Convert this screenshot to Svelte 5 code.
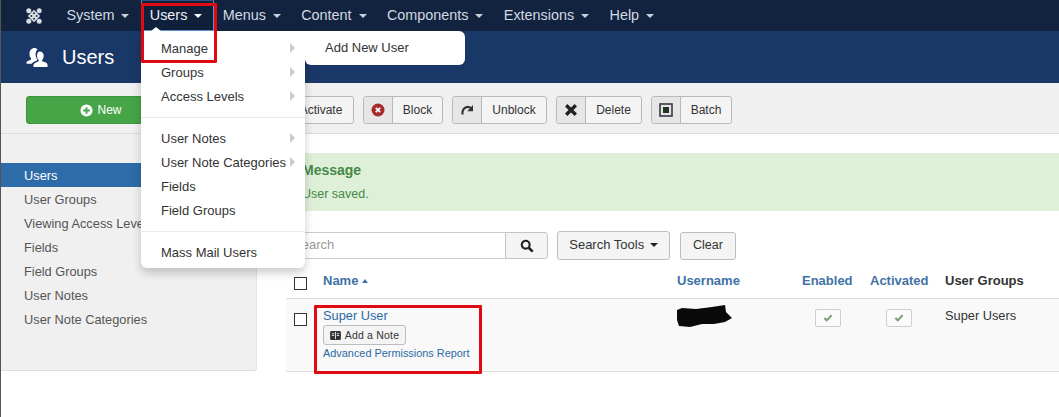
<script>
  const navItems = ['System', 'Users', 'Menus', 'Content', 'Components', 'Extensions', 'Help'];
  const sideItems = ['Users', 'User Groups', 'Viewing Access Levels', 'Fields', 'Field Groups', 'User Notes', 'User Note Categories'];
  const menuA = [['Manage', true], ['Groups', true], ['Access Levels', true]];
  const menuB = [['User Notes', true], ['User Note Categories', true], ['Fields', false], ['Field Groups', false]];
</script>

<div class="app">
  <nav class="nav">
    <svg class="logo" viewBox="0 0 16 16" width="16" height="16">
      <g fill="#d9dde3">
        <circle cx="2.800" cy="2.800" r="2.500"/>
        <circle cx="13.200" cy="2.800" r="2.500"/>
        <circle cx="2.800" cy="13.200" r="2.500"/>
        <circle cx="13.200" cy="13.200" r="2.500"/>
        <path d="M8 1.800 14.200 8 8 14.200 1.800 8z"/>
      </g>
      <g fill="#2a3750">
        <circle cx="8" cy="5.300" r="1"/>
        <circle cx="8" cy="10.700" r="1"/>
        <circle cx="5.300" cy="8" r="1"/>
        <circle cx="10.700" cy="8" r="1"/>
      </g>
    </svg>
    <ul class="nav-list">
      {#each navItems as item}
        <li class="nav-item" class:open={item === 'Users'}>
          <span>{item}</span><i class="caret"></i>
        </li>
      {/each}
    </ul>
  </nav>

  <header class="title">
    <svg viewBox="0 0 22 19" width="22" height="19">
      <g fill="#fff">
        <path d="M13.500 3.500c2.600 0 4.200 1.900 4.200 4.300 0 1.800-.7 3.300-1.700 4.200-.3.800.1 1.200 1 1.600 2 .8 4.100 1.200 4.500 2.900V19H7.500v-2.300c.4-1.500 2.300-2.100 4.200-2.900.9-.4 1.300-.9 1-1.700-1-.9-1.700-2.400-1.700-4.300 0-2.400 1-4.300 2.500-4.300z"/>
        <path d="M8.500 0c1.300 0 2.400.6 3 1.500-1.200 1-1.900 2.700-1.900 4.800 0 2 .6 3.700 1.700 5 .1.700-.1 1-.9 1.400-1.900.8-3.900 1.500-4.600 3.100H.500v-1.600c.3-1.100 2.200-1.700 3.800-2.300.8-.4 1-.8.800-1.500C4.100 9.500 3.500 8 3.500 5.800 3.500 2.200 5.700 0 8.500 0z"/>
      </g>
    </svg>
    <h1>Users</h1>
  </header>

  <div class="toolbar">
    <button class="btn-new">
      <svg viewBox="0 0 14 14" width="13" height="13"><circle cx="7" cy="7" r="6.500" fill="#fff"/><path d="M7 3.500v7M3.500 7h7" stroke="#46a546" stroke-width="2"/></svg>
      New
    </button>
    <button class="tool w-edit"><span class="ic"></span><span class="lb">Edit</span></button>
    <button class="tool w-activate"><span class="ic"></span><span class="lb">Activate</span></button>
    <button class="tool w-block">
      <span class="ic"><svg viewBox="0 0 14 14" width="14" height="14"><circle cx="7" cy="7" r="6.500" fill="#a72a2d"/><path d="M4.800 4.800l4.400 4.400M9.200 4.800l-4.400 4.400" stroke="#fff" stroke-width="1.800"/></svg></span>
      <span class="lb">Block</span>
    </button>
    <button class="tool w-unblock">
      <span class="ic"><svg viewBox="0 0 14 14" width="14" height="14"><path d="M2.500 11.500C2 7 4.500 3.800 7.800 3.800c1.300 0 2.300.5 3 1.300" fill="none" stroke="#333" stroke-width="2.200"/><path d="M13 2v6.200H7.200z" fill="#333"/></svg></span>
      <span class="lb">Unblock</span>
    </button>
    <button class="tool w-delete">
      <span class="ic"><svg viewBox="0 0 14 14" width="14" height="14"><path d="M2.200 2.200l9.600 9.600M11.800 2.200l-9.600 9.600" stroke="#222" stroke-width="3.400"/></svg></span>
      <span class="lb">Delete</span>
    </button>
    <button class="tool w-batch">
      <span class="ic"><svg viewBox="0 0 14 14" width="14" height="14"><rect x="1" y="1" width="12" height="12" fill="none" stroke="#3b3648" stroke-width="1.600"/><rect x="4" y="4" width="6" height="6" fill="#223322"/></svg></span>
      <span class="lb">Batch</span>
    </button>
  </div>

  <div class="body">
    <aside class="sidebar">
      <ul>
        {#each sideItems as s, i}
          <li class:active={i === 0}>{s}</li>
        {/each}
      </ul>
    </aside>

    <main class="main">
      <div class="alert">
        <h4>Message</h4>
        <p>User saved.</p>
      </div>

      <div class="search">
        <input class="search-input" placeholder="Search" />
        <button class="search-btn" aria-label="Search">
          <svg viewBox="0 0 16 16" width="14" height="14"><circle cx="6.500" cy="6.500" r="4.500" fill="none" stroke="#222" stroke-width="2.400"/><path d="M10 10l4.500 4.500" stroke="#222" stroke-width="3"/></svg>
        </button>
        <button class="plain tools">Search Tools <i class="caret dark"></i></button>
        <button class="plain clear">Clear</button>
      </div>

      <div class="grid head">
        <div><span class="cb"></span></div>
        <div class="th">Name <i class="up"></i></div>
        <div class="th">Username</div>
        <div class="th">Enabled</div>
        <div class="th">Activated</div>
        <div class="th dark-th">User Groups</div>
      </div>
      <div class="grid row">
        <div><span class="cb row-cb"></span></div>
        <div class="name">
          <a href="#top">Super User</a>
          <button class="note">
            <svg viewBox="0 0 12 10" width="11" height="9"><rect width="12" height="10" rx="1.500" fill="#333"/><path d="M6 1v8" stroke="#f4f4f4"/><path d="M2 3h2.500M2 5h2.500M7.500 3H10M7.500 5H10" stroke="#f4f4f4"/></svg>
            Add a Note
          </button>
          <a class="small" href="#top">Advanced Permissions Report</a>
        </div>
        <div>
          <svg class="blob" viewBox="0 0 56 22" width="56" height="22"><path d="M1 5 6 3 20 4 36 2 49 0 50 7 56 13 49 17 38 19 26 19 14 22 3 21 1 15z" fill="#0a0a0a"/></svg>
        </div>
        <div><span class="toggle t1"><svg viewBox="0 0 12 10" width="10" height="8"><path d="M1.500 5l3 3L10.500 1.500" fill="none" stroke="#6f9f72" stroke-width="2.400"/></svg></span></div>
        <div><span class="toggle t2"><svg viewBox="0 0 12 10" width="10" height="8"><path d="M1.500 5l3 3L10.500 1.500" fill="none" stroke="#6f9f72" stroke-width="2.400"/></svg></span></div>
        <div class="groups">Super Users</div>
      </div>
    </main>
  </div>

  <div class="menu">
    <i class="notch"></i>
    <ul>
      {#each menuA as [t, sub]}
        <li><span>{t}</span>{#if sub}<i class="arrow"></i>{/if}</li>
      {/each}
    </ul>
    <hr />
    <ul>
      {#each menuB as [t, sub]}
        <li><span>{t}</span>{#if sub}<i class="arrow"></i>{/if}</li>
      {/each}
    </ul>
    <hr />
    <ul>
      <li><span>Mass Mail Users</span></li>
    </ul>
  </div>
  <div class="submenu">Add New User</div>

  <div class="mark mark-top"></div>
  <div class="mark mark-row"></div>
</div>

<style>
  :global(body) { margin: 0; background: #fff; }
  * { box-sizing: border-box; }
  .app {
    position: relative;
    width: 1059px;
    height: 417px;
    overflow: hidden;
    border-left: 1px solid #555;
    font-family: "Liberation Sans", Arial, sans-serif;
    font-size: 13px;
    color: #333;
  }
  ul { list-style: none; margin: 0; padding: 0; }

  .nav {
    height: 31px;
    background: #12233f;
    display: flex;
    align-items: center;
    padding-left: 25px;
  }
  .logo { flex: none; }
  .nav-list { display: flex; margin-left: 24.500px; gap: 20.300px; }
  .nav-item {
    display: flex;
    align-items: center;
    color: #d3d9e2;
    font-size: 14.400px;
    line-height: 31px;
    position: relative;
  }
  .nav-item.open { color: #eef1f5; }
  .nav-item.open::before {
    content: "";
    position: absolute;
    left: -9px;
    right: -12px;
    top: 0;
    bottom: 0;
    border: 1px solid #5d93cf;
    border-top-color: #33527f;
    background: #10203a;
    z-index: 0;
  }
  .nav-item span, .nav-item .caret { position: relative; z-index: 1; }
  .caret {
    display: inline-block;
    width: 0;
    height: 0;
    margin-left: 7px;
    margin-top: 1px;
    border-left: 4px solid transparent;
    border-right: 4px solid transparent;
    border-top: 4px solid #c9d0da;
  }
  .nav-item.open .caret { border-top-color: #fff; }
  .caret.dark { border-top-color: #222; margin-left: 2px; vertical-align: 2px; }

  .title {
    height: 52px;
    background: #1a3867;
    display: flex;
    align-items: center;
    padding-left: 25px;
    gap: 14px;
  }
  h1 { margin: 0; color: #fff; font-size: 20px; font-weight: 400; }

  .toolbar {
    height: 51px;
    background: #f0f0f0;
    border-bottom: 1px solid #dcdcdc;
    display: flex;
    align-items: flex-start;
    padding: 13px 0 0 25px;
    gap: 9px;
  }
  button { font-family: inherit; font-size: 12px; color: #333; cursor: pointer; }
  .btn-new {
    width: 150px;
    height: 28px;
    background: #46a546;
    border: 1px solid #3d963d;
    border-radius: 3px;
    color: #fff;
    font-size: 12px;
    display: flex;
    align-items: center;
    justify-content: center;
    gap: 4px;
    padding: 0;
  }
  .tool {
    height: 28px;
    display: flex;
    align-items: stretch;
    padding: 0;
    background: #f4f4f4;
    border: 1px solid #b9b9b9;
    border-radius: 3px;
  }
  .w-edit { width: 65px; }
  .w-activate { width: 95px; }
  .w-block { width: 80px; }
  .w-unblock { width: 95px; }
  .w-delete { width: 86px; }
  .w-batch { width: 81px; }
  .ic {
    flex: none;
    width: 29px;
    background: #e6e6e6;
    border-right: 1px solid #b9b9b9;
    border-radius: 3px 0 0 3px;
    display: flex;
    align-items: center;
    justify-content: center;
  }
  .lb { flex: 1; line-height: 26px; white-space: nowrap; text-align: center; }

  .body { display: flex; align-items: flex-start; }
  .sidebar {
    width: 256px;
    height: 237px;
    background: #f0f0f0;
    border-bottom: 1px solid #dedede;
    border-right: 1px solid #e4e4e4;
    border-radius: 0 0 3px 0;
    padding-top: 29px;
  }
  .sidebar li {
    height: 24px;
    line-height: 26px;
    padding-left: 23px;
    font-size: 12.800px;
    color: #555;
    white-space: nowrap;
  }
  .sidebar li.active { background: #2d6ca9; color: #fff; }

  .main { margin-left: 29px; width: 773px; padding-top: 19px; }
  .alert {
    height: 58px;
    background: #dff0d8;
    padding: 9px 0 0 16px;
    color: #468847;
  }
  .alert h4 { margin: 0; font-size: 14px; line-height: 17px; font-weight: 700; }
  .alert p { margin: 7px 0 0; font-size: 12.500px; line-height: 17px; }

  .search { display: flex; align-items: flex-start; margin-top: 21px; height: 28px; }
  .search-input {
    width: 219px;
    height: 27px;
    border: 1px solid #ccc;
    border-right: 0;
    border-radius: 3px 0 0 3px;
    padding: 0 6px 2px;
    font: 13px "Liberation Sans", Arial, sans-serif;
    background: #fff;
  }
  .search-input::placeholder { color: #999; opacity: 1; }
  .search-btn {
    width: 43px;
    height: 27px;
    background: #f4f4f4;
    border: 1px solid #c4c4c4;
    border-radius: 0 3px 3px 0;
    padding: 0;
    display: flex;
    align-items: center;
    justify-content: center;
  }
  .plain {
    background: #f4f4f4;
    border: 1px solid #bdbdbd;
    border-radius: 3px;
    height: 28px;
    padding: 0 0 2px;
    font-size: 13px;
  }
  .tools { width: 113px; margin: -1px 0 0 9px; height: 29px; }
  .clear { width: 56px; margin-left: 10px; font-size: 12.500px; }

  .grid {
    display: grid;
    grid-template-columns: 37px 354px 125px 68px 75px 1fr;
  }
  .head { height: 39px; padding-top: 13px; border-bottom: 1px solid #ddd; }
  .th { color: #3f72a5; font-weight: 700; font-size: 13px; line-height: 16px; }
  .th.dark-th { color: #333; }
  .up {
    display: inline-block;
    width: 0; height: 0;
    border-left: 3.500px solid transparent;
    border-right: 3.500px solid transparent;
    border-bottom: 4px solid #3f72a5;
    vertical-align: 2px;
  }
  .cb {
    display: block;
    width: 13px;
    height: 13px;
    margin: 4px 0 0 8px;
    background: #fff;
    border: 1px solid #333;
  }
  .row {
    height: 73px;
    background: #f9f9f9;
    border-bottom: 1px solid #ddd;
  }
  .cb.row-cb { margin-top: 14px; }
  .name { display: flex; flex-direction: column; align-items: flex-start; padding-top: 9px; }
  a { color: #2c6aa5; text-decoration: none; font-size: 12.800px; line-height: 16px; }
  a.small { font-size: 10.900px; line-height: 14px; margin-top: 1px; }
  .note {
    width: 83px;
    height: 20px;
    margin-top: 1px;
    background: #f4f4f4;
    border: 1px solid #bdbdbd;
    border-radius: 3px;
    font-size: 10.500px;
    padding: 0;
    display: flex;
    align-items: center;
    justify-content: center;
    gap: 4px;
    letter-spacing: .2px;
  }
  .blob { display: block; margin-top: 6px; margin-left: -1px; }
  .toggle {
    display: flex;
    align-items: center;
    justify-content: center;
    width: 26px;
    height: 18px;
    margin-top: 10px;
    background: #fbfbfb;
    border: 1px solid #cfcfcf;
    border-radius: 2px;
  }
  .t1 { margin-left: 13px; }
  .t2 { margin-left: 16px; }
  .groups { padding-top: 9px; line-height: 16px; font-size: 12.800px; }

  .menu {
    position: absolute;
    left: 140px;
    top: 31px;
    width: 164px;
    height: 237px;
    background: #fff;
    border-radius: 0 0 6px 6px;
    box-shadow: 0 5px 10px rgba(0,0,0,.2);
    padding-top: 5px;
    z-index: 2;
  }
  .menu li {
    height: 24px;
    line-height: 26px;
    padding-left: 20px;
    position: relative;
    color: #333;
    font-size: 13px;
    white-space: nowrap;
  }
  .menu hr { border: 0; border-top: 1px solid #e9e9e9; margin: 9px 0 8px; }
  .notch {
    position: absolute;
    left: 10px;
    top: -4px;
    width: 0; height: 0;
    border-left: 5px solid transparent;
    border-right: 5px solid transparent;
    border-bottom: 4px solid #fff;
  }
  .arrow {
    position: absolute;
    left: 149px;
    top: 7px;
    width: 0; height: 0;
    border-top: 5px solid transparent;
    border-bottom: 5px solid transparent;
    border-left: 5px solid #ccc;
  }
  .submenu {
    position: absolute;
    left: 304px;
    top: 31px;
    width: 160px;
    height: 34px;
    line-height: 34px;
    padding-left: 20px;
    background: #fff;
    border-radius: 0 6px 6px 6px;
    font-size: 13px;
    z-index: 2;
  }
  .mark { position: absolute; border: 3px solid #e00a12; z-index: 3; border-radius: 1px; }
  .mark-top { left: 140px; top: 3px; width: 76px; height: 60px; }
  .mark-row { left: 313px; top: 305px; width: 168px; height: 69px; }
</style>
